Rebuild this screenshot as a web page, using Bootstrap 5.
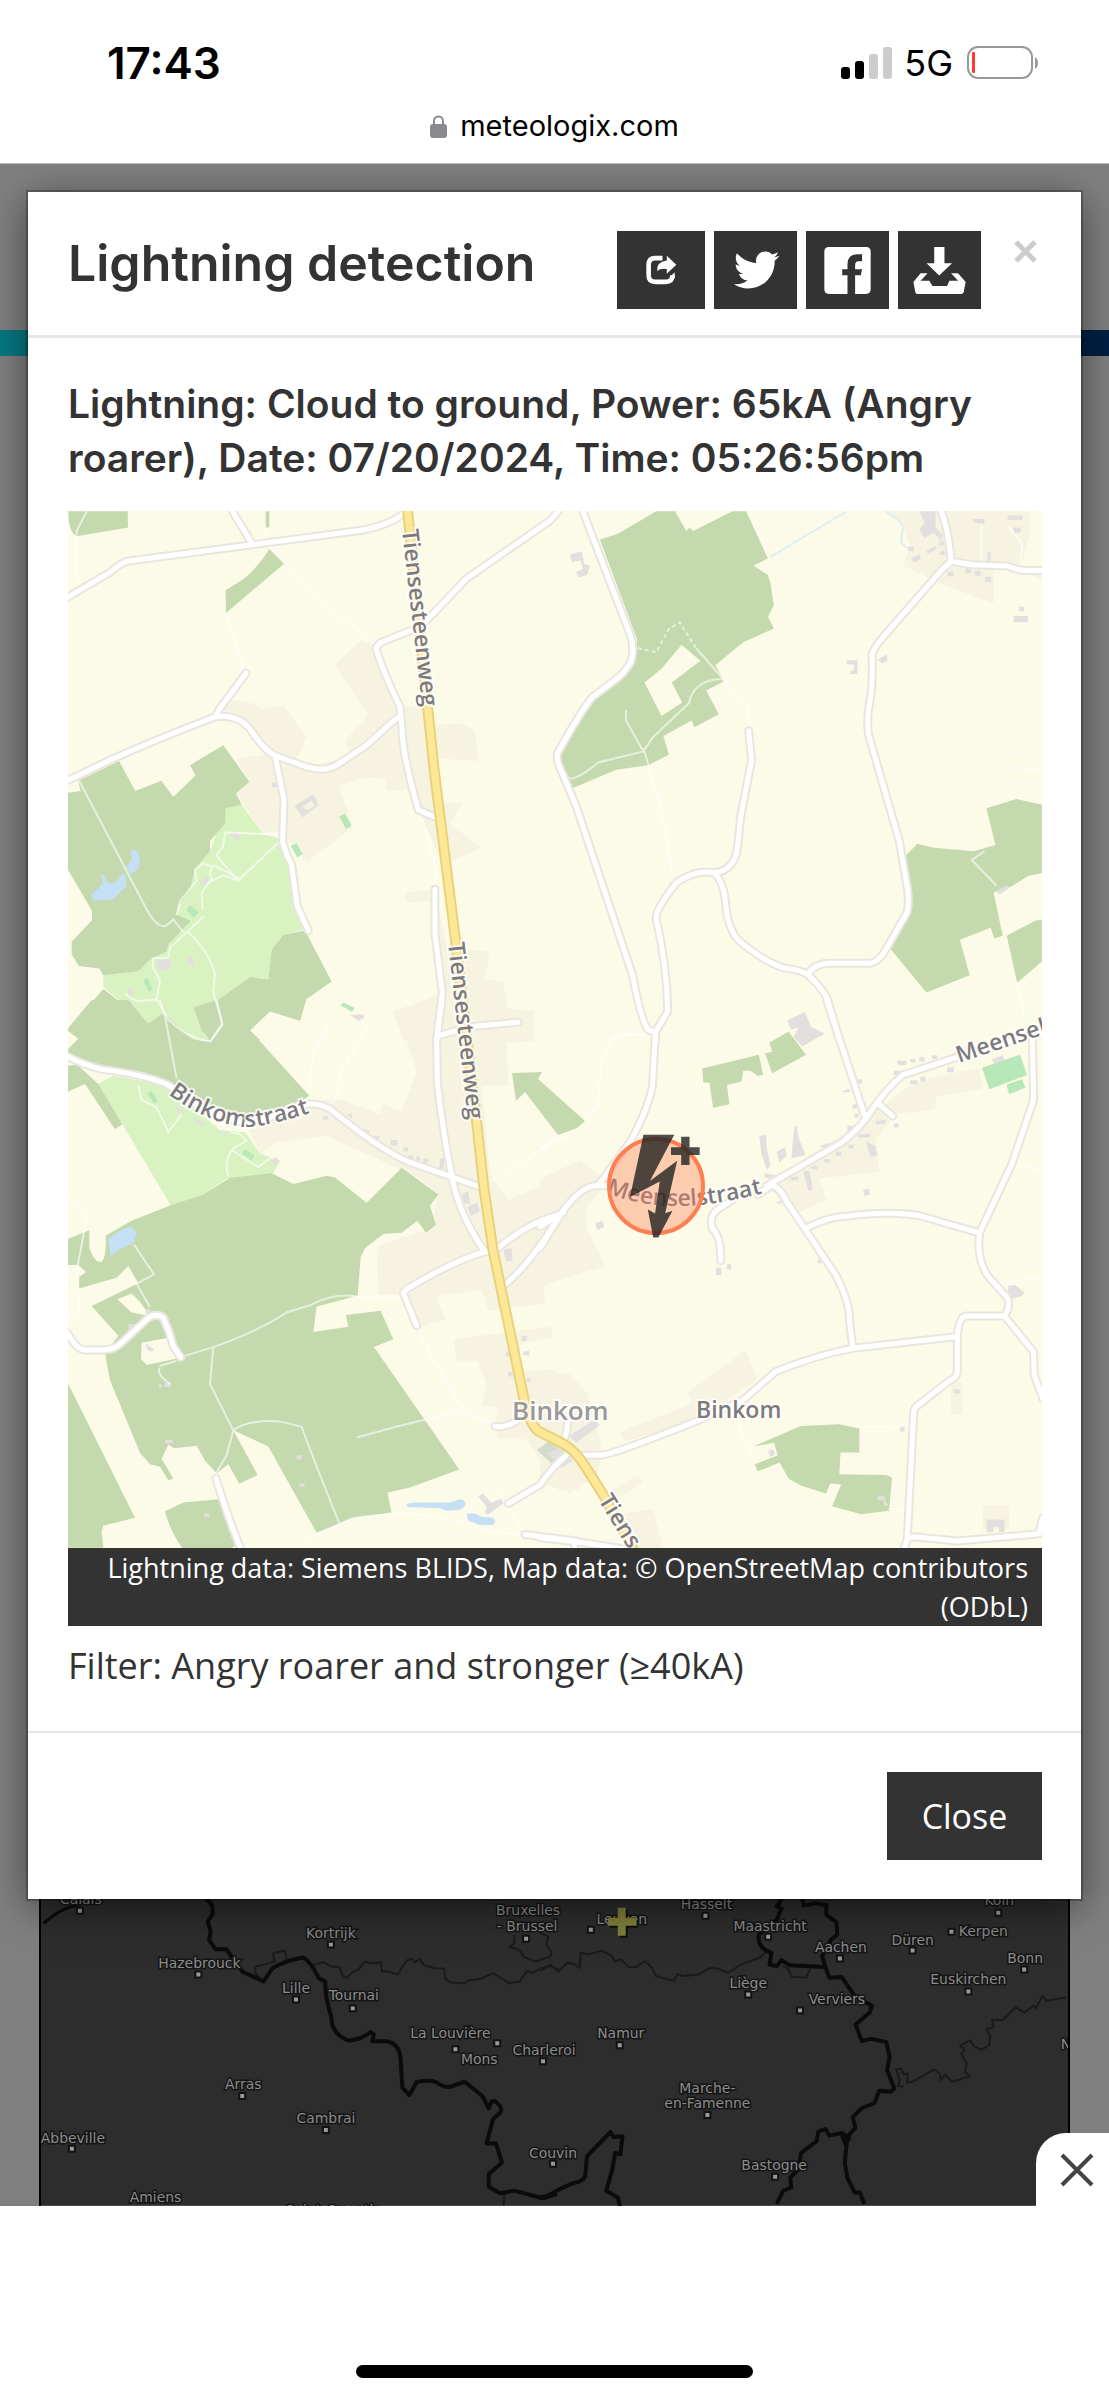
<!DOCTYPE html>
<html lang="en">
<head>
<meta charset="utf-8">
<meta name="viewport" content="width=device-width, initial-scale=1">
<title>Lightning detection</title>
<link rel="stylesheet" href="https://cdn.jsdelivr.net/npm/bootstrap@5.3.0/dist/css/bootstrap.min.css">
<style>
  body { background: #fff; color: #333; font-family: "Open Sans", "Liberation Sans", sans-serif; }
  .phone-bar { font-family: Inter, "Liberation Sans", sans-serif; color: #000; border-bottom: 1px solid #bbb; padding-top: 32px; height: 164px; }
  .clock { font-size: 44px; line-height: 62px; font-weight: 600; }
  .net { font-size: 36px; line-height: 62px; margin: 0 14px 0 12px; }
  .site { font-size: 29px; line-height: 36px; margin-top: 14px; gap: 13px; }
  .status-row { padding: 0 70px 0 107px; }
  .stage { display: grid; background: #808080; overflow: hidden; }
  .stage > * { grid-area: 1 / 1; min-width: 0; }
  .stripe { height: 26px; margin-top: 166px; background: linear-gradient(90deg, #067a82, #001f42); }
  .radar { margin: 0 39px; border: solid #000; border-width: 0 2px; }
  .radar text { font: 14px "DejaVu Sans", sans-serif; fill: #8c8c8c; stroke: #151515; stroke-width: 3px; paint-order: stroke; text-anchor: middle; }
  .dialog-box { margin: 28px 28px 307px; background: #fff; box-shadow: 0 8px 38px rgba(0,0,0,.5), 0 0 0 2px rgba(0,0,0,.25); z-index: 1; }
  .dialog-head { padding: 39px 44px 26px 40px; border-bottom: 3px solid #e6e6e6; }
  .dialog-head h1, .dialog-main h2 { font-family: Inter, "Liberation Sans", sans-serif; font-weight: 600; margin: 0; }
  .dialog-head h1 { font-size: 50px; line-height: 64px; }
  .dialog-main { padding: 39px 39px 40px 40px; }
  .dialog-main h2 { font-size: 39px; line-height: 54px; margin-bottom: 26px; }
  .dialog-foot { padding: 39px; border-top: 2px solid #e6e6e6; }
  .tool { width: 83px; height: 78px; background: #333; color: #fff; border: 0; border-radius: 0; padding: 0; display: flex; align-items: center; justify-content: center; }
  .tool-wide { width: 88px; }
  .tools { gap: 9px; }
  .dismiss { border: 0; background: none; padding: 0; margin: 9px 0 0 33px; line-height: 0; }
  .credit { background: #333; color: #fff; font-size: 27px; line-height: 39px; padding: 0 14px; }
  .filter-line { font-size: 36px; line-height: 50px; margin: 15px 0 0; }
  .close-btn { width: 155px; height: 88px; background: #333; color: #fff; border-radius: 0; font-size: 34px; }
  .street text { font: 600 23px "Open Sans", "Noto Sans", sans-serif; fill: #7d7a7e; stroke: #fff; stroke-width: 4px; stroke-opacity: .8; paint-order: stroke; }
  .street .hamlet { fill: #999; font-size: 26px; }
  .street path, .radar path { vector-effect: non-scaling-stroke; }
  .bottom-bar { position: relative; height: 195px; padding-bottom: 23px; z-index: 2; }
  .bar-tab { position: absolute; right: 0; bottom: 100%; width: 73px; height: 73px; border: 0; background: #fff; border-radius: 30px 0 0 0; padding: 0 0 0 8px; }
  .home-mark { width: 397px; height: 13px; border-radius: 7px; background: #000; }
</style>
</head>
<body>
<header class="phone-bar">
  <div class="status-row d-flex justify-content-between align-items-center">
    <span class="clock">17:43</span>
    <span class="d-flex align-items-center">
      <svg width="51" height="33" viewBox="0 0 51 33" aria-hidden="true"><rect x="0" y="20" width="9" height="12" rx="3"/><rect x="14" y="14" width="9" height="18" rx="3"/><g fill="#ccc"><rect x="28" y="7" width="9" height="25" rx="3"/><rect x="42" y="0" width="9" height="32" rx="3"/></g></svg>
      <span class="net">5G</span>
      <svg width="72" height="34" viewBox="0 0 72 34" aria-hidden="true"><rect x="1" y="1" width="64" height="31" rx="10" fill="none" stroke="#999" stroke-width="2"/><rect x="5" y="6" width="3" height="21" rx="1" fill="#ff3b30"/><path d="M68 11Q71 13 71 17T68 23z" fill="#999"/></svg>
    </span>
  </div>
  <div class="site d-flex justify-content-center align-items-center">
    <svg width="17" height="23" viewBox="0 0 17 23" aria-hidden="true"><rect y="9" width="17" height="14" rx="3" fill="#8a8a8e"/><path d="M4 10V6a4.500 4.500 0 0 1 9 0v4" fill="none" stroke="#8a8a8e" stroke-width="2"/></svg>
    <span>meteologix.com</span>
  </div>
</header>

<main class="stage">
  <div class="d-flex flex-column justify-content-between">
    <div class="stripe"></div>
    <svg class="radar" viewBox="39 1848 1031 357" role="img" aria-label="Radar map">
      <rect x="39" y="1848" width="1031" height="357" fill="#2d2d2d"/>
      <g fill="none" stroke="#1a1a1a" stroke-width="2" stroke-linejoin="round">
        <g transform="translate(0 1880) scale(.3571 .3333)">
          <path d="M735 300L712 275V255L735 250L765 240L762 215L795 207L800 235M875 250L905 242L925 255L950 257L955 280L968 290L985 272L1000 265L1020 240L1040 245L1065 242L1068 270H1085L1113 278L1125 255L1140 235L1155 232L1160 242L1175 232L1185 250L1215 260L1243 262L1245 290L1260 303L1300 305L1310 297L1345 292L1380 275L1400 288L1425 305L1455 300L1475 268L1490 275L1510 262L1540 253L1568 265"/>
          <path d="M1440 160V185L1425 195L1455 205L1465 225L1500 240L1540 225L1545 212L1530 190L1535 165L1510 152"/>
          <path d="M1412 940L1410 975"/>
        </g>
        <g transform="translate(540 1880) scale(.3629 .3317)">
          <path d="M0 270L30 250L50 272L75 245L92 248L110 260L112 215L135 220L170 208L200 225L205 240L225 235L245 258L265 258L290 240L310 260L320 285L370 300L380 278L395 285L440 280L470 260L490 262L520 275L560 248L610 228L630 205"/>
          <path d="M670 255L685 262L697 287L735 290L748 262"/>
          <path d="M1005 620L990 618L995 600L985 568L1000 565L1005 582L1018 580L1015 608L1030 605L1090 568L1105 580L1108 600L1120 583L1140 605L1190 588L1175 575L1180 550L1165 520L1175 508L1162 495L1190 480L1200 498L1220 508L1243 495L1245 465L1235 445L1255 440L1250 418L1280 418L1315 380L1340 395L1365 375L1372 382L1390 345L1400 360L1455 350"/>
        </g>
      </g>
      <g fill="none" stroke="#0b0b0b" stroke-width="4" stroke-linejoin="round">
        <g transform="translate(0 1880) scale(.3571 .3333)">
          <path stroke-width="3" d="M117 125Q160 80 219 68"/>
          <path d="M565 40L590 70L592 95L578 120L586 150L582 175L600 203H630L645 225L675 270L735 300L760 260Q790 240 845 228Q865 235 890 290L908 300Q908 350 925 405Q925 460 975 478Q1010 475 1035 452L1045 460L1040 480H1080Q1115 485 1120 530L1125 620L1145 642L1165 603Q1200 595 1220 603Q1250 625 1265 615L1300 602L1350 645L1368 682L1375 662L1385 660Q1410 680 1400 695L1380 715L1362 788L1388 787L1405 845L1368 880V918L1400 938L1440 930L1520 953L1560 940"/>
        </g>
        <g transform="translate(540 1880) scale(.3629 .3317)">
          <path d="M-8 955Q20 955 50 932L90 912Q120 908 125 890L130 830L195 757L203 772L228 770L222 825L208 820L200 870L183 935L215 955L222 985"/>
          <path d="M672 45L655 75L668 80L655 115L605 160Q600 200 640 215L635 250L655 255L668 237L690 252L790 258L800 290L835 288L870 345L918 375L912 395L873 432L890 482L915 475L958 485L967 530L960 570L980 625L970 635L938 632L925 670L890 685L865 712L872 745L850 770L843 850L850 895L870 940L885 940L897 975"/>
          <path d="M725 45L730 72L760 65L792 70V100L820 122L822 160L805 175L780 225L790 258M655 975L672 935L695 925L692 895L715 870L722 820L765 785L770 755L790 748L800 768L835 760L855 775L845 795L835 765"/>
        </g>
      </g>
      <path fill="#999" stroke="#121212" stroke-width="2" d="M75 1906h6v6h-6zM327 1940h6v6h-6zM194 1970h6v6h-6zM292 1995h6v6h-6zM349 2004h6v6h-6zM494 2039h6v6h-6zM452 2045h6v6h-6zM540 2057h6v6h-6zM238 2092h6v6h-6zM322 2126h6v6h-6zM67 2145h6v6h-6zM550 2160h6v6h-6zM523 1934h6v6h-6zM588 1925h6v6h-6zM703 1911h6v6h-6zM766 1932h6v6h-6zM838 1954h6v6h-6zM911 1946h6v6h-6zM950 1927h6v6h-6zM1023 1965h6v6h-6zM997 1908h6v6h-6zM967 1987h6v6h-6zM746 1990h6v6h-6zM798 2006h6v6h-6zM617 2041h6v6h-6zM705 2111h6v6h-6zM773 2173h6v6h-6z"/>
      <text x="79" y="1902">Calais</text><text x="330" y="1936">Kortrijk</text><text x="198" y="1966">Hazebrouck</text><text x="295" y="1992">Lille</text><text x="353" y="1999">Tournai</text><text x="450" y="2037">La Louvière</text><text x="479" y="2063">Mons</text><text x="544" y="2054">Charleroi</text><text x="242" y="2088">Arras</text><text x="325" y="2122">Cambrai</text><text x="71" y="2142">Abbeville</text><text x="553" y="2157">Couvin</text><text x="154" y="2201">Amiens</text><text x="333" y="2214">Saint-Quentin</text>
      <text x="528" y="1913">Bruxelles</text><text x="527" y="1929">- Brussel</text><text x="622" y="1922">Leuven</text><text x="707" y="1907">Hasselt</text><text x="771" y="1929">Maastricht</text><text x="842" y="1950">Aachen</text><text x="914" y="1943">Düren</text><text x="985" y="1934">Kerpen</text><text x="1027" y="1961">Bonn</text><text x="1001" y="1903">Köln</text><text x="970" y="1983">Euskirchen</text><text x="749" y="1987">Liège</text><text x="838" y="2003">Verviers</text><text x="621" y="2037">Namur</text><text x="708" y="2092">Marche-</text><text x="708" y="2107">en-Famenne</text><text x="775" y="2169">Bastogne</text><text x="1068" y="2048">N</text>
      <path fill="#0f0f0f" d="M620 1908h8v10h10v8h-10v10h-8v-10h-10v-8h10z"/>
      <path fill="#80803a" d="M618 1906h8v10h11v8h-11v10h-8v-10h-10v-8h10z"/>
    </svg>
  </div>

  <section class="dialog-box" role="dialog" aria-labelledby="dlgTitle">
    <div class="dialog-head d-flex align-items-start">
      <h1 id="dlgTitle" class="me-auto">Lightning detection</h1>
      <div class="tools d-flex">
        <button class="tool tool-wide" type="button" aria-label="Share"><svg width="31" height="30" viewBox="162 132 94 90"><path d="M225 134V148Q193 152 196 180Q207 170 225 174V188L254 161Z" fill="#fff"/><path d="M212 141H190Q170 141 170 161V193Q170 213 190 213H222Q242 213 242 193" fill="none" stroke="#fff" stroke-width="14"/><path d="M235 200V198L249 184V202Z" fill="#fff"/></svg></button>
        <button class="tool" type="button" aria-label="Twitter"><svg width="48" height="48" viewBox="0 0 24 24"><path fill="#fff" d="M23.643 4.937c-.835.37-1.732.62-2.675.733.962-.576 1.700-1.490 2.048-2.578-.9.534-1.897.922-2.958 1.130-.85-.904-2.060-1.470-3.400-1.470-2.572 0-4.658 2.086-4.658 4.660 0 .364.042.718.12 1.060-3.873-.195-7.304-2.050-9.602-4.868-.4.690-.63 1.490-.63 2.342 0 1.616.823 3.043 2.072 3.878-.764-.025-1.482-.234-2.110-.583v.06c0 2.257 1.605 4.140 3.737 4.568-.392.106-.803.162-1.227.162-.3 0-.593-.028-.877-.082.593 1.850 2.313 3.198 4.352 3.234-1.595 1.250-3.604 1.995-5.786 1.995-.376 0-.747-.022-1.112-.065 2.062 1.323 4.510 2.093 7.140 2.093 8.570 0 13.255-7.098 13.255-13.254 0-.2-.005-.402-.014-.602.91-.658 1.700-1.477 2.323-2.410z"/></svg></button>
        <button class="tool" type="button" aria-label="Facebook"><svg width="47" height="47" viewBox="705 110 140 142"><path fill="#fff" d="M719 110H831Q845 110 845 124V238Q845 252 831 252H798V195H815L819 177H798V165Q798 153 808 153H819V132H805Q775 132 775 162V177H759V195H775V252H719Q705 252 705 238V124Q705 110 719 110Z"/></svg></button>
        <button class="tool" type="button" aria-label="Download"><svg width="53" height="47" viewBox="970 110 158 142"><path fill="#fff" d="M1033 110H1064V159H1087L1048 196L1010 159H1033ZM992 189H1013L992 212H1018L1028 228H1072L1079 212H1105L1084 189H1105L1128 216L1122 247Q1120 252 1115 252H982Q977 252 976 247L970 216Z"/></svg></button>
      </div>
      <button class="dismiss" type="button" aria-label="Dismiss"><svg width="23" height="23" viewBox="0 0 23 23"><path d="M2 2L21 21M21 2L2 21" stroke="#ccc" stroke-width="5"/></svg></button>
    </div>

    <div class="dialog-main">
      <h2>Lightning: Cloud to ground, Power: 65kA (Angry roarer), Date: 07/20/2024, Time: 05:26:56pm</h2>
      <svg class="street d-block w-100" viewBox="68 511 974 1037" role="img" aria-label="Street map">
        <defs>
          <!-- minor roads, drawn twice: casing, then surface -->
          <g id="roads" fill="none" stroke-linejoin="round" stroke-linecap="round">
            <g transform="translate(60 500) scale(.3333 .3444)">
              <path d="M22 283L150 210Q180 185 200 178L905 88Q990 72 1030 40M518 33L575 125M22 815L150 755Q300 690 465 630Q530 620 570 665Q610 725 645 742L740 775Q790 790 830 770L920 712L990 650L1020 628M465 630L480 605L558 503M645 742L672 870L668 990Q675 1020 695 1060L712 1180L745 1250M1495 33L1470 60L1220 228L1105 345L1075 370L960 415L948 430Q965 490 1020 600L1026 660Q1025 730 1075 900L1135 925M1125 1130V1260L1147 1430Q1140 1500 1130 1568"/>
            </g>
            <g transform="translate(540 500) scale(.3629 .3444)">
              <path d="M118 33L250 395Q262 440 250 470Q235 500 210 520L145 572Q120 600 48 735Q45 760 60 790L100 890L255 1380Q280 1520 300 1540L318 1545M318 1568V1545L352 1485Q350 1350 320 1215Q318 1190 375 1112Q430 1070 480 1083Q540 1075 545 1000L553 920L583 755L575 670M480 1083Q508 1110 512 1180Q520 1260 560 1290Q640 1355 680 1360Q720 1365 738 1378Q790 1430 795 1460L825 1568M738 1378Q755 1345 800 1345H910Q935 1340 950 1310L1010 1200Q1018 1180 1013 1130L990 990L905 680Q900 630 908 590Q918 540 915 450Q920 430 940 405L1105 205L1133 178Q1125 80 1105 33M1133 178L1190 188L1290 192Q1310 203 1340 205H1385"/>
            </g>
            <g transform="translate(60 1000) scale(.3333 .3571)">
              <path d="M1145 0L1130 110L1132 230Q1150 380 1175 490Q1195 600 1275 705H1295M1135 100L1230 75L1375 62M22 158Q80 185 130 195Q250 208 325 238Q450 330 560 345Q650 330 700 300Q760 280 810 305Q960 420 1050 455L1260 523M1275 705Q1180 730 1040 810L1030 820L1070 912M1310 698Q1400 625 1500 600M1337 795Q1400 750 1500 605M22 932Q50 980 75 980H130Q165 980 190 955L265 890Q290 875 310 890Q330 930 340 970L362 1000M468 1340Q500 1440 548 1550M1305 1193Q1330 1200 1370 1180M1345 1410L1440 1358Q1475 1310 1530 1265M1515 1225Q1525 1200 1522 1175M1395 1497L1550 1515"/>
            </g>
            <g transform="translate(540 1000) scale(.3629 .3571)">
              <path d="M318 90L310 240Q300 300 250 395L160 520M185 520H150Q110 525 60 595L0 695M0 635L65 595M0 1505L120 1520L250 1540M95 1520V1545M625 520L830 400Q870 370 900 330Q950 250 1000 210L1150 160L1383 90M790 0L895 325M932 290L972 325M1357 100L1360 280L1300 460L1212 650Q1200 730 1240 780L1285 830Q1300 850 1280 885H1175Q1155 885 1150 940V1040Q1150 1055 1130 1065L1035 1140L1030 1150L1012 1510L1002 1540M1280 885L1360 985L1362 1050L1385 1115M600 545L640 518Q665 530 680 565L815 770Q855 850 853 900L862 975M735 638Q800 605 850 605Q970 590 1050 605L1210 652M1145 943L862 975Q760 995 650 1040L560 1120L430 1180Q220 1265 170 1275H100M530 560L485 590Q465 610 475 640Q500 665 498 730M1012 1510L1030 1503L1150 1515L1375 1495L1385 1450"/>
            </g>
          </g>
          <path id="lblA" d="M402 530L422 706L442 880"/><path id="lblB" d="M448 943L468 1120L488 1290"/><path id="lblC" d="M598 1500L634 1558"/>
          <path id="lblD" d="M168 1094Q208 1124 246 1127Q275 1126 330 1106"/>
          <path id="lblE" d="M606 1193Q640 1206 680 1206Q720 1206 790 1186"/>
          <path id="lblF" d="M959 1063L1039 1036L1160 1000"/>
        </defs>
        <rect x="68" y="511" width="974" height="1037" fill="#fcfbe7"/>
        <!-- built-up areas -->
        <g fill="#f6f4e1">
          <path transform="translate(60 500) scale(.3333 .3444)" d="M905 405L825 480L925 622L855 700L870 740L740 780L620 740L530 750L568 818L530 852L610 970L665 965L740 1052L880 950L835 830L920 805L975 810L980 845L1040 840L1075 900L1150 1060L1265 1010L1170 940L1208 880L1140 880L1120 750L1255 758L1245 670L1205 648L1110 655L1105 600H1030L960 430ZM515 580L575 590L610 608L670 595L740 690L710 750L620 740L540 640L470 625ZM1035 1140L1125 1130L1160 1300L1290 1310L1275 1390L1330 1400L1345 1475L1422 1485V1568H1030L1000 1485L1130 1440V1165L1040 1168Z"/>
          <path transform="translate(60 1000) scale(.3333 .3571)" d="M997 30L1140 0H1290L1340 30L1422 35V115L1340 120L1345 240H1265L1290 490L1345 560L1580 460V740L1450 800L1455 850L1285 870L1265 810L1130 830L1155 895L1060 920L1030 825H955L950 690L1110 640L1135 545L1080 500L800 380L650 400L600 430L560 350L750 280L850 280L960 320L970 290L1025 312L1070 200L1035 100ZM1180 950L1475 915V945L1380 960V1040L1475 1035L1560 1090V1370L1500 1375L1400 1230L1310 1230V1140L1265 1135L1280 1080L1255 1010L1190 1010Z"/>
          <path transform="translate(540 1000) scale(.3629 .3571)" d="M0 500L110 450L190 510L110 600L180 745L0 800ZM220 1210L420 1130L405 1100L565 980L600 1060L430 1180L235 1235ZM625 520L900 330L1030 230L1210 190L1220 250L1090 270V305L980 320L925 390L935 480L770 500L790 560L700 600ZM0 1050L80 1045L130 1100L170 1250L160 1330L80 1380L0 1350ZM1133 1070H1163V1160H1133ZM1220 1415H1293V1480H1220ZM185 1380L270 1330L285 1355L200 1400ZM220 1440L310 1425L340 1534H260Z"/>
          <path transform="translate(540 500) scale(.3629 .3444)" d="M950 33H1350V100L1320 205L1383 230V205L1250 190V300L1120 250L1000 190L1020 130L990 60Z"/>
        </g>
        <!-- parks -->
        <g fill="#d9f2c2">
          <path transform="translate(60 500) scale(.3333 .3444)" d="M497 895L545 885L610 970L665 985L695 1060L712 1180L740 1245L670 1262L635 1305L625 1392L570 1385L470 1455L490 1520L455 1568H400L310 1490L265 1520L130 1415V1380L235 1368L350 1205L405 1070L450 1020Z"/>
          <path transform="translate(60 1000) scale(.3333 .3571)" d="M115 235L160 212L325 240L480 365L555 370L600 430L660 450L638 488L500 500L430 545L332 575L187 348ZM215 0H480L490 70L455 116L390 100L315 45L265 68Z"/>
        </g>
        <!-- woods -->
        <g fill="#c4d9ae">
          <path transform="translate(60 500) scale(.3333 .3444)" d="M25 33H203L204 80L50 105Q25 95 25 33M617 33H628V80H617ZM628 142L672 185L498 328L497 262L550 230Q590 200 628 142M22 850L62 845L55 815L177 758L226 845L304 815L340 862L407 800L390 770L490 712L568 818L528 852L545 885L497 895L495 940L450 990V1020L405 1070L390 1130L355 1180L350 1205L392 1222L325 1290L320 1310L270 1335L235 1368L130 1380L118 1360L57 1353L35 1320V1283L96 1220V1193L22 1070ZM670 1262L735 1250L815 1398L738 1450L720 1512L630 1485L570 1540L600 1568H455L425 1540L402 1475L470 1455L570 1385L625 1392L635 1305ZM130 1420L265 1520L310 1490L400 1568H60L22 1540Z"/>
          <path transform="translate(60 1000) scale(.3333 .3571)" d="M22 140L55 108L25 78L95 0H205L265 68L315 45L390 110L452 116L425 80L402 20L470 0H738L720 58L630 30L570 85L748 268L700 300L560 350L335 235Q250 208 130 195L22 158ZM22 185L50 180L115 235L187 348L165 362L75 235L22 258ZM210 620L332 575L430 545L510 498L635 485L700 515L800 492L825 497L920 568L1025 470L1135 545L1110 577L1128 630L1098 652L1072 618L1025 652L970 655L915 695L902 720L893 828L770 858L760 930L865 915L858 882L962 870L1000 950L942 972L1198 1315L1050 1365L982 1380L995 1435L875 1452L770 1492L625 1250L520 1205L593 1330L538 1355L505 1300L470 1325L435 1290L410 1248L342 1255L325 1245L305 1285L340 1340L325 1345L300 1307L270 1300L240 1268L150 1065L135 990L175 940L95 857L235 793L205 745L170 778L57 808L58 775L78 762L55 742H22V670L88 645V690Q100 735 125 733Q140 720 137 660ZM22 1070L225 1450L130 1472L125 1490L130 1534H22ZM315 1432L370 1407L475 1398L530 1525L500 1545H375Q330 1490 315 1432"/>
          <path d="M512 1073L542 1072L538 1079L585 1121L577 1128L558 1135L525 1092L516 1101Z"/>
          <path fill-rule="evenodd" transform="translate(540 500) scale(.3629 .3444)" d="M165 115L215 98L320 33H372L403 90L413 80L422 90L530 33H568L628 170L588 190L628 218L635 240L644 305L628 340L645 373L560 413L483 480L505 520V528L458 553L493 622L425 660L418 640L340 685L355 740L298 770L210 783L88 838L50 745L145 572L250 470L268 405ZM390 420L335 490L288 530L335 627L392 588L363 530L442 467ZM1008 1032L1040 998L1085 1010L1195 1020L1255 1002L1230 895L1313 868L1383 885V1083L1345 1092L1298 1122L1250 1140L1275 1265L1252 1273L1242 1242L1157 1277L1184 1380L1065 1430L963 1300L1015 1190ZM1286 1265L1365 1222L1383 1218V1340L1315 1402Z"/>
          <path transform="translate(540 1000) scale(.3629 .3571)" d="M447 192L603 153L615 210L600 212L580 198H560L555 228L515 238L522 292L477 302L467 232L450 230ZM632 120L685 88L733 153L640 205L620 150L640 145ZM588 1250L718 1193L825 1188L880 1200V1267H828L825 1328L955 1330L970 1338L962 1430L885 1440L805 1418L830 1357L800 1353L788 1382L720 1360L685 1340L660 1295L600 1320L575 1260L592 1300L655 1275L645 1240Z"/>
        </g>
        <path fill="#fcfbe7" transform="translate(60 1000) scale(.3333 .3571)" d="M172 838L215 822L240 845L270 885L215 875ZM245 960L330 945L345 990L360 1002L260 1022L243 1005Z"/>
        <g fill="#c5dff5">
          <path transform="translate(60 500) scale(.3333 .3444)" d="M213 1018L230 1017L240 1040L237 1070L212 1087L198 1068L215 1045ZM92 1148L128 1115L124 1090L130 1087L142 1110Q165 1125 185 1087L196 1088L200 1120L158 1160L100 1163Z"/>
          <path transform="translate(60 1000) scale(.3333 .3571)" d="M145 670Q180 640 213 635L230 650L222 680L180 698L152 718ZM1038 1412L1060 1407L1170 1407L1200 1398Q1218 1400 1216 1415Q1205 1430 1190 1428L1160 1430L1140 1423L1045 1420ZM1220 1440Q1235 1432 1265 1447L1300 1450Q1310 1460 1300 1470L1260 1470L1225 1458Z"/>
        </g>
        <g fill="#b8e7b9">
          <path transform="translate(60 500) scale(.3333 .3444)" d="M838 918L855 910L875 945L858 955ZM692 1005L710 997L728 1028L712 1038ZM378 1190L390 1177L416 1198L402 1213ZM250 1395L262 1387L278 1420L266 1428ZM842 1468L850 1459L883 1474L877 1487Z"/>
          <path transform="translate(60 1000) scale(.3333 .3571)" d="M262 262L275 255L294 282L282 290ZM546 430L555 418L584 436L574 450Z"/>
          <path transform="translate(540 1000) scale(.3629 .3571)" d="M1218 190L1323 153L1342 210L1238 250ZM1285 237L1328 222L1338 245L1293 264Z"/>
        </g>
        <!-- buildings -->
        <g fill="#e4dfdf">
          <path fill-rule="evenodd" transform="translate(60 500) scale(.3333 .3444)" d="M703 888L760 855L777 885L728 922ZM726 890L742 900L765 888L755 873ZM290 1337L330 1333L333 1362L295 1367ZM380 1330L392 1325L405 1350L392 1357ZM507 968L535 966L543 985L530 987ZM418 1110L440 1093L448 1105L430 1120ZM200 1420L212 1413L223 1430L210 1440ZM635 820H650V834H635ZM870 1495L910 1493L913 1503L895 1512ZM1530 160L1560 150V175L1537 180Z"/>
          <path transform="translate(540 500) scale(.3629 .3444)" d="M82 158L115 150L122 185L138 190L130 218L105 225L100 208L118 200L112 175L88 178ZM845 465H875V505H855V495H865V478H845ZM930 465L955 448L958 465L945 475ZM1305 337H1345V355H1305ZM1320 310H1334V323H1320ZM1045 33H1090V80L1110 100L1105 118L1085 95L1060 110L1045 85L1060 65ZM1065 148L1090 133L1093 142L1070 155ZM1022 170L1045 158L1050 170L1030 182ZM1015 135H1030V148H1015ZM1100 120H1114V132H1100ZM1103 147H1117V160H1103ZM1195 55H1225V70L1195 65ZM1288 45H1330V58H1288ZM1305 80H1325V95H1305ZM1172 198H1188V212H1172ZM1198 206H1214V220H1198ZM1226 223H1244V238H1226ZM1123 208H1140V222H1123ZM1233 150H1242V180H1233ZM1258 1135L1288 1117L1292 1127L1265 1146ZM682 1510L730 1487L748 1530L783 1548L722 1568L700 1555L715 1527L692 1533Z"/>
          <path transform="translate(60 1000) scale(.3333 .3571)" d="M1205 545L1225 535L1230 570H1212ZM1222 580L1252 568L1260 592L1232 605ZM1330 700L1355 695L1358 730L1338 732ZM1140 445L1155 440L1150 475H1138ZM1255 1390L1268 1382L1295 1408L1325 1395L1333 1408L1283 1442L1275 1435L1280 1420ZM345 300L370 308L365 318L348 312ZM400 328L435 345L430 352L402 338ZM470 365L500 372L495 380ZM635 450L650 440L658 452L645 462ZM905 360L930 365L925 378ZM942 380H958V390H942ZM992 392H1013V408H992ZM1030 412H1045V424H1030ZM1045 435H1060V447H1045ZM1068 438H1080V450H1068ZM1090 444H1105V456H1090ZM1385 940H1400V955H1385ZM1390 985L1408 982V995H1390ZM1338 985H1350V998H1338ZM1345 1042H1358V1054H1345ZM1400 1058H1412V1070H1400ZM860 320L878 318L875 332ZM790 325H805V335H790ZM432 1438H448V1448H432ZM710 1275H725V1287H710ZM718 1353H734V1364H718ZM296 1076H306V1085H296ZM315 1072H333V1084H315ZM315 1232H338V1242H315ZM258 962L282 978L275 985L260 978ZM205 908H222V922H205ZM256 866H270V878H256Z"/>
          <path fill="#d3dbcb" d="M537 1450L557 1435L570 1442L552 1464Z"/>
          <path transform="translate(540 1000) scale(.3629 .3571)" d="M682 60L728 35L748 78L783 95L722 130L700 105L715 78L692 82ZM604 380L624 378V410L635 465L625 475L610 430ZM702 352L708 355L712 385L732 435L693 443L697 390ZM652 425L675 412L680 435L660 455ZM898 395L925 410L930 435L910 440ZM725 480L742 478L752 530L740 535ZM618 485L680 495L675 505L620 498ZM890 532L905 528L910 545L895 550ZM152 625L172 618L178 635L158 645ZM485 750H500V770H485ZM515 740H527V755H515ZM1290 800L1310 798L1335 820L1325 830L1290 838ZM1230 1455H1280V1490H1265V1475H1250V1490H1230ZM628 1262L643 1258L648 1272L635 1280ZM930 1388H950V1400L960 1415L950 1418L945 1400H930ZM80 1220L150 1175L165 1190L100 1240ZM20 1270L60 1250L90 1290L60 1310ZM992 1195H1005V1208H992ZM1140 1090H1157V1102H1140ZM985 170H1010V182H985ZM1020 165H1035V175H1020ZM1045 160H1060V172H1045ZM1080 155H1095V165H1080ZM1122 188H1140V202H1122ZM1245 165L1275 155L1280 168L1250 178ZM1048 215H1062V228H1048ZM1020 225H1040V235H1020ZM830 258L850 248L856 258ZM873 222H887V234H873ZM862 292H875V303H862ZM866 318H878V330H866ZM847 352H862V368H847ZM925 338L955 335L950 347H925ZM975 345H988V357H975ZM975 198H990V210H975ZM690 495H712V505H690ZM748 465H765V475H748ZM782 445H800V455H782ZM815 425H830V437H815ZM850 405H865V415H850ZM875 375H910V385H875ZM770 408L800 400L800 412H775ZM650 568L665 560V572ZM765 727H778V737H765Z"/>
        </g>
        <!-- footpaths and streams -->
        <g fill="none" stroke="#fff" stroke-opacity=".6" stroke-width="2">
          <path transform="translate(60 500) scale(.3333 .3444)" d="M80 33L50 90L45 205L60 245M618 80V130L640 145L815 320L900 380L945 420M498 330L555 500M55 810L250 1170Q290 1250 320 1235L340 1218L370 1255M495 965L610 970L655 965M495 965L490 1005L470 1030L480 1045L535 1105L660 990M540 1100L460 1060L450 1080L455 1100L425 1140L428 1190M455 1065L430 1055L405 1075L410 1105L360 1165L350 1205M535 1105L490 1090L450 1108M430 1210L330 1300L325 1330H280L278 1355L300 1395L290 1450L320 1500M385 1255Q440 1300 465 1375L460 1430L487 1520L455 1565M290 1450L230 1455L195 1435M1085 920L1130 1070V1110"/>
          <path transform="translate(60 1000) scale(.3333 .3571)" d="M300 0L315 45L350 220M315 45Q380 110 452 116L487 70L470 0M805 70L760 150L745 260M925 70L850 190L820 290M22 550L80 610L50 760L60 870L22 895M235 240L245 280L290 300L325 370L365 320M505 495Q490 450 520 415L560 395L540 375L510 370M515 420L595 468L635 440M362 1000L460 972Q590 930 680 875L750 855Q820 820 890 830H1020M460 972L450 1075L520 1205L500 1275L468 1325M520 1205Q560 1175 660 1180L725 1195Q770 1310 838 1465M890 1225L1000 1197L1210 1148M1070 912L1120 1010L1225 1165L1300 1185M720 1520L875 1452Q1040 1425 1170 1455L1300 1490L1395 1497L1310 1375M222 685L282 768L230 795L270 860M298 1030Q290 1050 330 1075M298 1025L350 1010M1290 505Q1350 485 1400 450L1480 395L1560 370"/>
          <path transform="translate(540 500) scale(.3629 .3444)" d="M80 808Q105 812 160 762L285 730L310 690L410 590Q425 520 505 520L430 430M285 730L237 640V610M285 720L330 880L365 1090M505 520L575 600V670M1217 70V180M1290 75L1330 130L1320 195M1290 778H1340L1383 785M1258 1120L1190 1045L1225 1020M1315 1400L1335 1500M200 1568L230 1552L310 1550"/>
          <path stroke-dasharray="4 3" transform="translate(540 500) scale(.3629 .3444)" d="M270 430L320 442L355 375L385 355L430 430"/>
          <path transform="translate(540 1000) scale(.3629 .3571)" d="M290 95L200 100L170 170L160 290L125 340M0 420L50 380M1300 460L1383 475M1265 795L1383 775M545 1185L590 1290M880 1195L980 1197L1025 1180M960 1425L1010 1428"/>
          <path stroke="#dfeef2" stroke-opacity="1" transform="translate(540 500) scale(.3629 .3444)" d="M635 165L845 33M950 33L985 55L1000 75L995 125L1015 140"/>
        </g>
        <use href="#roads" stroke="#e9e6df" stroke-width="9"/>
        <use href="#roads" stroke="#fff" stroke-width="5"/>
        <!-- main road -->
        <g fill="none">
          <path d="M407 505L434 769L456 944L475 1107L484 1189L493 1250L525 1404Q530 1424 538 1431L562 1443Q575 1450 585 1466L604 1496L640 1562" stroke="#ead27a" stroke-width="11"/>
          <path d="M407 505L434 769L456 944L475 1107L484 1189L493 1250L525 1404Q530 1424 538 1431L562 1443Q575 1450 585 1466L604 1496L640 1562" stroke="#fde898" stroke-width="7"/>
        </g>
        <text><textPath href="#lblA">Tiensesteenweg</textPath></text>
        <text><textPath href="#lblB">Tiensesteenweg</textPath></text>
        <text><textPath href="#lblC">Tiens</textPath></text>
        <text><textPath href="#lblD">Binkomstraat</textPath></text>
        <text><textPath href="#lblE">Meenselstraat</textPath></text>
        <text><textPath href="#lblF">Meensel</textPath></text>
        <text class="hamlet" x="512" y="1420">Binkom</text>
        <text x="696" y="1418">Binkom</text>
        <!-- strike marker -->
        <circle cx="656" cy="1186" r="47" fill="#ff7f50" fill-opacity=".38" stroke="#ff7f50" stroke-width="4"/>
        <path transform="translate(540 1000) scale(.3629 .3571)" fill="#222" fill-opacity=".8" d="M285 377H370L303 507L378 450L345 597L365 590L326 665H312L297 587L317 598L330 508L248 552ZM389 383H412V412H440V434H412V462H389V434H361V412H389Z"/>
      </svg>
      <div class="credit text-end">Lightning data: Siemens BLIDS, Map data: © OpenStreetMap contributors (ODbL)</div>
      <p class="filter-line">Filter: Angry roarer and stronger (≥40kA)</p>
    </div>

    <div class="dialog-foot d-flex justify-content-end">
      <button class="btn close-btn" type="button">Close</button>
    </div>
  </section>
</main>

<footer class="bottom-bar bg-white d-flex justify-content-center align-items-end">
  <button class="bar-tab" type="button" aria-label="Close banner"><svg width="34" height="34" viewBox="0 0 34 34"><path d="M2 2L32 32M32 2L2 32" stroke="#444" stroke-width="4"/></svg></button>
  <div class="home-mark"></div>
</footer>
<script src="https://cdn.jsdelivr.net/npm/bootstrap@5.3.0/dist/js/bootstrap.bundle.min.js"></script>
</body>
</html>
